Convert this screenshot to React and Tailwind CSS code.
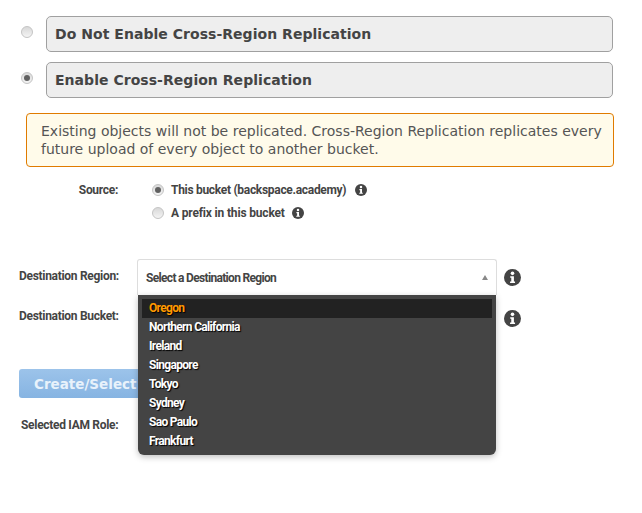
import React from 'react'

const regions = ['Oregon', 'Northern California', 'Ireland', 'Singapore', 'Tokyo', 'Sydney', 'Sao Paulo', 'Frankfurt']

const InfoIcon = ({ size }) => (
  <svg width={size} height={size} viewBox="0 0 18 18" className="shrink-0">
    <circle cx="9" cy="9" r="9" fill="#444444" />
    <circle cx="9" cy="4.6" r="1.9" fill="#fff" />
    <path d="M6.6 7.6h3.9v5.6h1.2v1.6H6.4v-1.6h1.3V9.2H6.6z" fill="#fff" />
  </svg>
)

const Radio = ({ checked }) => (
  <span className="flex h-3 w-3 shrink-0 items-center justify-center rounded-full border border-[#c4c4c4] bg-gradient-to-b from-[#d8d8d8] to-[#f4f4f4]">
    {checked && <span className="h-1.5 w-1.5 rounded-full bg-[#606060]" />}
  </span>
)

const Choice = ({ checked, children }) => (
  <div className="flex items-center">
    <div className="ml-[21px] w-[25px]">
      <div className="-mt-[4px]">
        <Radio checked={checked} />
      </div>
    </div>
    <div className="flex h-[36px] w-[567px] items-center rounded-[5px] border border-[#a0a0a0] bg-[#eeeeee] pl-[8px] font-['DejaVu_Sans',sans-serif] text-[14px] font-bold tracking-[0.04px] text-[#444444]">
      {children}
    </div>
  </div>
)

export default function App() {
  return (
    <div className="h-[513px] w-[642px] overflow-hidden bg-white pt-4 font-['Roboto',sans-serif] text-[12px] font-bold tracking-[-0.3px] text-[#444444]">
      <div className="flex flex-col gap-[10px] tracking-normal">
        <Choice>Do Not Enable Cross-Region Replication</Choice>
        <Choice checked>Enable Cross-Region Replication</Choice>
      </div>

      {/* Warning */}
      <div className="ml-[26px] mt-[15px] h-[54px] w-[588px] rounded-[4px] border border-[#e07b00] bg-[#fffbea] py-[8px] pl-[14px] pr-[8px] font-['DejaVu_Sans',sans-serif] text-[14px] font-normal leading-[18px] tracking-normal text-[#555555]">
        Existing objects will not be replicated. Cross-Region Replication replicates every future upload of every object to another bucket.
      </div>

      {/* Source */}
      <div className="mt-[15px] flex">
        <div className="w-[118px] text-right leading-[16px]">Source:</div>
        <div className="ml-[34px] flex flex-col gap-[7px] leading-[16px]">
          <div className="flex items-center gap-[7px]">
            <Radio checked />
            <span>This bucket (backspace.academy)</span>
            <span className="ml-[2px]"><InfoIcon size={12} /></span>
          </div>
          <div className="flex items-center gap-[7px]">
            <Radio />
            <span className="tracking-[-0.17px]">A prefix in this bucket</span>
            <InfoIcon size={12} />
          </div>
        </div>
      </div>

      {/* Destination */}
      <div className="relative mt-[38px]">
        <div className="flex h-[36px] items-center">
          <div className="-mt-[2px] w-[118px] whitespace-nowrap pl-[19px]">Destination Region:</div>
          <div className="ml-[19px] flex h-[36px] w-[360px] items-center justify-between rounded-t-[3px] border border-b-0 border-[#dddddd] bg-white px-[8px] tracking-[-0.68px]">
            <span>Select a Destination Region</span>
            <span className="h-0 w-0 border-x-[3.5px] border-b-[5px] border-x-transparent border-b-[#888888]" />
          </div>
          <div className="ml-[7px]"><InfoIcon size={17} /></div>
        </div>

        <div className="mt-[5px] flex h-[36px] items-center">
          <div className="-mt-[4px] w-[118px] whitespace-nowrap pl-[19px]">Destination Bucket:</div>
          <div className="ml-[386px]"><InfoIcon size={17} /></div>
        </div>

        <button className="ml-[19px] mt-[33px] block h-[29px] w-[200px] rounded-[3px] bg-gradient-to-b from-[#9cc3ea] to-[#86b4e2] pl-[15px] pt-px text-left font-['DejaVu_Sans',sans-serif] text-[13.5px] font-bold tracking-normal text-[#e8f2fb]">
          Create/Select
        </button>

        <div className="ml-[21px] mt-[18px]">Selected IAM Role:</div>

        {/* Open dropdown */}
        <div className="absolute left-[138px] top-[36px] h-[160px] w-[358px] rounded-b-[6px] bg-[#444444] px-[4px] pt-[4px] tracking-[-0.68px] shadow-[0_2px_6px_rgba(0,0,0,0.25)]">
          {regions.map((region, i) => (
            <div
              key={region}
              className={`flex h-[19px] items-center pb-px pl-[7px] [text-shadow:1px_1px_1px_#000] ${i === 0 ? 'bg-[#222222] text-[#ff9900]' : 'text-white'}`}
            >
              {region}
            </div>
          ))}
        </div>
      </div>
    </div>
  )
}
